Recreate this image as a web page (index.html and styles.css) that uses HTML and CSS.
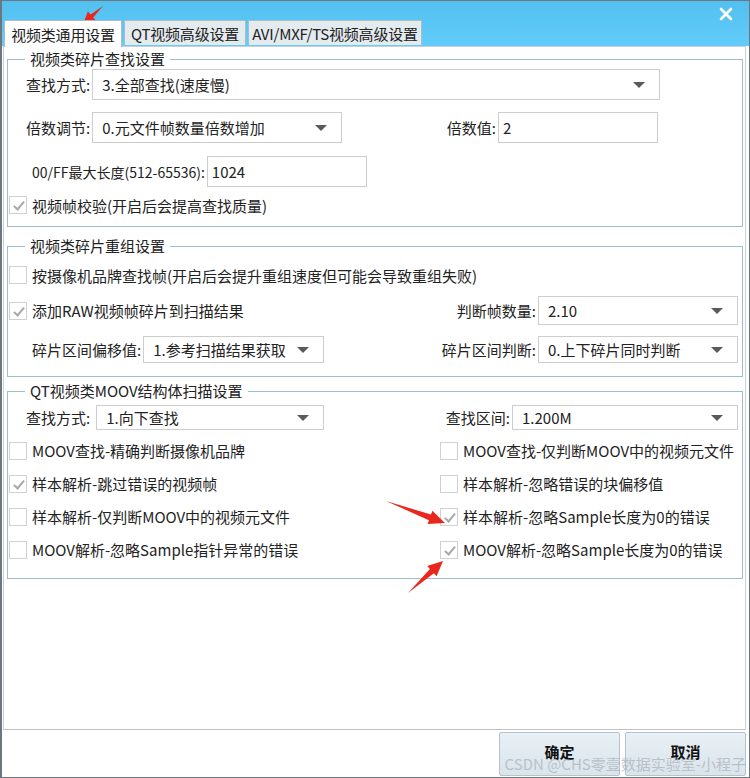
FILE: index.html
```html
<!DOCTYPE html>
<html lang="zh-CN">
<head>
  <meta charset="utf-8"/>
  <meta name="viewport" content="width=device-width, initial-scale=1.0"/>
  <title>视频类通用设置</title>
  <link rel="stylesheet" href="styles.css">
</head>
<body>
  <div class="window">
    <div class="titlebar">
      <div class="tabs">
        <div class="tab t1 active">视频类通用设置</div>
        <div class="tab t2">QT视频高级设置</div>
        <div class="tab t3">AVI/MXF/TS视频高级设置</div>
      </div>
      <button class="close-btn" title="关闭">
        <svg width="14" height="14" viewBox="0 0 14 14"><path d="M2 2 L12 12 M12 2 L2 12" stroke="#fff" stroke-width="2.6" stroke-linecap="round"/></svg>
      </button>
    </div>

    <div class="panel">
      <!-- 碎片查找 -->
      <fieldset class="group g1">
        <legend>视频类碎片查找设置</legend>
        <div class="row h31 mt1">
          <span class="lbl ml17">查找方式:</span>
          <div class="combo w567"><span class="val">3.全部查找(速度慢)</span><i class="arrow"></i></div>
        </div>
        <div class="row h31 mt12">
          <span class="lbl ml17">倍数调节:</span>
          <div class="combo w249"><span class="val">0.元文件帧数量倍数增加</span><i class="arrow"></i></div>
          <span class="lbl push">倍数值:</span>
          <div class="edit w159 mr83">2</div>
        </div>
        <div class="row h31 mt13">
          <span class="lbl ml23 small">00/FF最大长度(512-65536):</span>
          <div class="edit w159">1024</div>
        </div>
        <div class="chk mt9">
          <i class="box checked"></i><span>视频帧校验(开启后会提高查找质量)</span>
        </div>
      </fieldset>

      <!-- 碎片重组 -->
      <fieldset class="group g2">
        <legend>视频类碎片重组设置</legend>
        <div class="chk mt11">
          <i class="box"></i><span>按摄像机品牌查找帧(开启后会提升重组速度但可能会导致重组失败)</span>
        </div>
        <div class="row h29 mt12">
          <div class="chk"><i class="box checked"></i><span>添加RAW视频帧碎片到扫描结果</span></div>
          <span class="lbl push">判断帧数量:</span>
          <div class="combo w199 mr3"><span class="val">2.10</span><i class="arrow"></i></div>
        </div>
        <div class="row h27 mt11">
          <span class="lbl ml23">碎片区间偏移值:</span>
          <div class="combo w180"><span class="val">1.参考扫描结果获取</span><i class="arrow"></i></div>
          <span class="lbl push">碎片区间判断:</span>
          <div class="combo w199 mr3"><span class="val">0.上下碎片同时判断</span><i class="arrow"></i></div>
        </div>
      </fieldset>

      <!-- MOOV 扫描 -->
      <fieldset class="group g3">
        <legend>QT视频类MOOV结构体扫描设置</legend>
        <div class="row h25 mt5">
          <span class="lbl ml17">查找方式:</span>
          <div class="combo w227 ml4"><span class="val">1.向下查找</span><i class="arrow"></i></div>
          <span class="lbl push">查找区间:</span>
          <div class="combo w225 mr3"><span class="val">1.200M</span><i class="arrow"></i></div>
        </div>
        <div class="checks">
          <div class="chk"><i class="box"></i><span>MOOV查找-精确判断摄像机品牌</span></div>
          <div class="chk"><i class="box"></i><span>MOOV查找-仅判断MOOV中的视频元文件</span></div>
          <div class="chk"><i class="box checked"></i><span>样本解析-跳过错误的视频帧</span></div>
          <div class="chk"><i class="box"></i><span>样本解析-忽略错误的块偏移值</span></div>
          <div class="chk"><i class="box"></i><span>样本解析-仅判断MOOV中的视频元文件</span></div>
          <div class="chk"><i class="box checked"></i><span>样本解析-忽略Sample长度为0的错误</span></div>
          <div class="chk"><i class="box"></i><span>MOOV解析-忽略Sample指针异常的错误</span></div>
          <div class="chk"><i class="box checked"></i><span>MOOV解析-忽略Sample长度为0的错误</span></div>
        </div>
      </fieldset>
    </div>

    <div class="footer">
      <button class="btn">确定</button>
      <button class="btn">取消</button>
    </div>
  </div>

  <div class="watermark">CSDN @CHS零壹数据实验室-小程子</div>

  <!-- 标注箭头 -->
  <svg class="annot" width="750" height="778" viewBox="0 0 750 778">
    <polygon fill="#e8281e" points="103,6 90.6,14.5 87.9,11.5 83,24 95.9,20.5 93.2,17.5"/>
    <polygon fill="#e8281e" points="386,501 428.9,520.2 427.6,524 445,523 432.4,510.8 431,514.6"/>
    <polygon fill="#e8281e" points="408,593 433.9,573.3 436.6,576.3 443,561 427.2,565.9 429.9,568.9"/>
  </svg>
</body>
</html>
```

FILE: styles.css
```css
html, body { margin: 0; padding: 0; background: #fff; }
body { position: relative; width: 750px; height: 778px; font-family: "Noto Sans CJK SC", "Noto Sans", sans-serif; font-size: 15px; color: #222; }
.window { width: 750px; height: 778px; box-sizing: border-box; border: 1px solid #6c767c; border-left-width: 2px; display: flex; flex-direction: column; background: #fff; overflow: hidden; }

/* 标题栏 + 选项卡 */
.titlebar { height: 45px; flex: none; background: linear-gradient(#52c0f0, #63ccfa); display: flex; align-items: flex-end; justify-content: space-between; padding-left: 2px; }
.tabs { display: flex; gap: 2px; }
.tab { height: 25px; line-height: 25px; padding: 0; text-align: center; background: #e4ebef; border: 1px solid #a9bcc7; border-bottom: none; box-sizing: border-box; white-space: nowrap; letter-spacing: -0.2px; }
.tab.t1 { width: 118px; }
.tab.t2 { width: 122px; }
.tab.t3 { width: 174px; }
.tab.active { height: 27px; line-height: 27px; background: #fff; margin-bottom: -1px; position: relative; z-index: 1; }
.close-btn { align-self: flex-start; margin: 4px 14px 0 0; background: none; border: none; padding: 2px; cursor: pointer; }

/* 内容面板 */
.panel { flex: 1 1 auto; margin: 0 3px 0 1px; border: 1px solid #c6d0d6; border-bottom-color: #c2c2c2; padding: 3px 2px 0 3px; background: #fff; }
.group { margin: 0; padding: 0 1px 0 1px; border: 1px solid #9dbdca; min-width: 0; }
.group legend { margin-left: 16px; padding: 0 5px; line-height: 18px; }
.g1 { padding-bottom: 12px; }
.g2 { margin-top: 10px; padding-bottom: 13px; }
.g3 { margin-top: 5px; padding-bottom: 12px; }

.row { display: flex; align-items: center; }
.h31 { height: 31px; }
.h29 { height: 29px; }
.h27 { height: 27px; }
.h25 { height: 25px; }
.mt1 { margin-top: 1px; }
.mt5 { margin-top: 5px; }
.mt9 { margin-top: 9px; }
.mt11 { margin-top: 11px; }
.mt12 { margin-top: 12px; }
.mt13 { margin-top: 13px; }
.ml4 { margin-left: 4px; }
.ml17 { margin-left: 17px; }
.ml23 { margin-left: 23px; }
.mr3 { margin-right: 3px; }
.mr83 { margin-right: 83px; }

.lbl { white-space: nowrap; margin-right: 2px; }
.lbl.small { font-size: 14px; }
.lbl.push { margin-left: auto; }

.combo { height: 100%; box-sizing: border-box; border: 1px solid #cdcdcd; background: #fff; display: flex; align-items: center; padding: 0 14px 0 9px; }
.combo .val { flex: 1; white-space: nowrap; }
.combo .arrow { width: 0; height: 0; border-left: 6px solid transparent; border-right: 6px solid transparent; border-top: 6px solid #5a5a5a; }
.edit { height: 100%; box-sizing: border-box; border: 1px solid #cdcdcd; background: #fff; display: flex; align-items: center; padding-left: 4px; }
.w159 { width: 160px; }
.w180 { width: 181px; }
.w199 { width: 200px; }
.w225 { width: 226px; }
.w227 { width: 228px; }
.w249 { width: 250px; }
.w567 { width: 568px; }

/* 复选框 */
.chk { display: flex; align-items: center; gap: 5px; height: 18px; white-space: nowrap; }
.box { width: 18px; height: 18px; flex: none; box-sizing: border-box; border: 1px solid #d0d0d0; background: #fff; position: relative; }
.box.checked::after { content: ""; position: absolute; left: 6px; top: 2px; width: 4px; height: 9px; border: solid #a9a9a9; border-width: 0 2px 2px 0; transform: rotate(40deg); }
.checks { display: grid; grid-template-columns: 431px 1fr; grid-auto-rows: 33px; margin-top: 4px; }
.checks .chk { height: 33px; }

/* 底部按钮 */
.footer { height: 47px; flex: none; display: flex; justify-content: flex-end; align-items: flex-start; gap: 5px; padding: 2px 3px 0 0; box-sizing: border-box; }
.btn { width: 121px; height: 44px; border: 1px solid #b4c3cd; border-radius: 2px; background: linear-gradient(#e9f0f5, #d9e4eb); font-family: inherit; font-size: 15px; font-weight: bold; color: #111; padding: 0 0 6px 0; }

.watermark { position: absolute; right: 4px; top: 753px; font-size: 15px; color: rgba(160, 166, 172, 0.6); white-space: nowrap; pointer-events: none; }
.annot { position: absolute; left: 0; top: 0; pointer-events: none; }
```
